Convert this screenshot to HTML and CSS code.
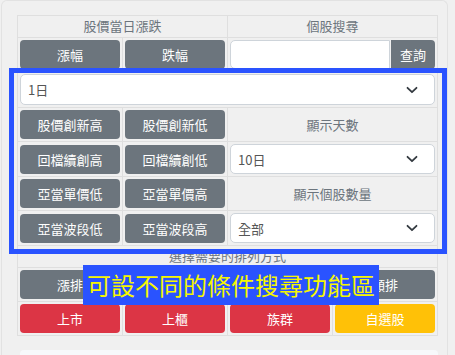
FILE: index.html
```html
<!DOCTYPE html>
<html lang="zh-Hant">
<head>
    <meta charset="UTF-8">
    <title>股價篩選</title>
    <link rel="stylesheet" href="styles.css">
</head>
<body class="page">
<div class="card">
    <table class="grid">
        <colgroup>
            <col><col><col><col>
        </colgroup>
        <tr>
            <th colspan="2">股價當日漲跌</th>
            <th colspan="2">個股搜尋</th>
        </tr>
        <tr>
            <td><button class="btn">漲幅</button></td>
            <td><button class="btn">跌幅</button></td>
            <td colspan="2">
                <div class="search">
                    <input class="search-input" value="">
                    <button class="btn btn-go">查詢</button>
                </div>
            </td>
        </tr>
        <tr>
            <td colspan="4">
                <div class="select select-tall">
                    <span>1日</span>
                    <svg class="chev" width="12" height="8" viewBox="0 0 12 8"><path d="M1.5 1.8 6 6.2 10.5 1.8" fill="none" stroke="#343a40" stroke-width="1.8" stroke-linecap="round" stroke-linejoin="round"/></svg>
                </div>
            </td>
        </tr>
        <tr>
            <td><button class="btn">股價創新高</button></td>
            <td><button class="btn">股價創新低</button></td>
            <td colspan="2" class="label">顯示天數</td>
        </tr>
        <tr>
            <td><button class="btn">回檔續創高</button></td>
            <td><button class="btn">回檔續創低</button></td>
            <td colspan="2">
                <div class="select">
                    <span>10日</span>
                    <svg class="chev" width="12" height="8" viewBox="0 0 12 8"><path d="M1.5 1.8 6 6.2 10.5 1.8" fill="none" stroke="#343a40" stroke-width="1.8" stroke-linecap="round" stroke-linejoin="round"/></svg>
                </div>
            </td>
        </tr>
        <tr>
            <td><button class="btn">亞當單價低</button></td>
            <td><button class="btn">亞當單價高</button></td>
            <td colspan="2" class="label">顯示個股數量</td>
        </tr>
        <tr>
            <td><button class="btn">亞當波段低</button></td>
            <td><button class="btn">亞當波段高</button></td>
            <td colspan="2">
                <div class="select">
                    <span>全部</span>
                    <svg class="chev" width="12" height="8" viewBox="0 0 12 8"><path d="M1.5 1.8 6 6.2 10.5 1.8" fill="none" stroke="#343a40" stroke-width="1.8" stroke-linecap="round" stroke-linejoin="round"/></svg>
                </div>
            </td>
        </tr>
        <tr>
            <th colspan="4">選擇需要的排列方式</th>
        </tr>
        <tr>
            <td><button class="btn">漲排</button></td>
            <td><button class="btn">跌排</button></td>
            <td><button class="btn">量排</button></td>
            <td><button class="btn">額排</button></td>
        </tr>
        <tr>
            <td><button class="btn btn-red">上市</button></td>
            <td><button class="btn btn-red">上櫃</button></td>
            <td><button class="btn btn-red">族群</button></td>
            <td><button class="btn btn-yellow">自選股</button></td>
        </tr>
    </table>
    <div class="next"></div>

    <!-- 標註框 -->
    <div class="mark"></div>
    <div class="mark-label">可設不同的條件搜尋功能區</div>
</div>
</body>
</html>
```

FILE: styles.css
```css
html, body {
    margin: 0;
    padding: 0;
}

.page {
    background: #f0f0f0;
    font-family: "Noto Sans CJK TC", "Noto Sans", sans-serif;
    font-size: 13px;
    width: 455px;
    height: 355px;
    overflow: hidden;
}

.card {
    position: relative;
    box-sizing: border-box;
    margin-left: 1px;
    width: 447px;
    height: 355px;
    overflow: hidden;
    border: 1px solid #e2e2e2;
    border-bottom: 0;
    border-radius: 6px 6px 0 0;
    padding: 14px 9px 0 15px;
    background: #f0f0f0;
}

.grid {
    border-collapse: collapse;
    table-layout: fixed;
    width: 421px;
}

.grid th,
.grid td {
    border: 1px solid #dfdfdf;
    padding: 2px;
    text-align: center;
    vertical-align: middle;
}

.grid th {
    font-weight: normal;
    color: #6c757d;
    height: 18px;
    padding: 1px 2px 2px;
    line-height: 18px;
}

.grid td.label {
    color: #6c757d;
}

.btn {
    display: block;
    width: 100%;
    height: 29px;
    border: 0;
    border-radius: 4px;
    background: #6c757d;
    color: #fff;
    font-family: inherit;
    font-size: 13px;
    padding: 0;
}

.btn-red {
    background: #dc3545;
}

.btn-yellow {
    background: #ffc107;
}

.search {
    display: flex;
}

.search-input {
    flex: 1;
    min-width: 0;
    height: 27px;
    border: 1px solid #ced4da;
    border-radius: 5px 0 0 5px;
    padding: 0;
    background: #fff;
}

.btn-go {
    width: 44px;
    flex: none;
    margin-left: 1px;
    border-radius: 0 4px 4px 0;
}

.select {
    display: flex;
    align-items: center;
    justify-content: space-between;
    height: 28px;
    border: 1px solid #ced4da;
    border-radius: 5px;
    background: #fff;
    padding: 0 16px 0 7px;
    color: #555;
    font-size: 13px;
}

.select-tall {
    height: 29px;
}

.chev {
    display: block;
}

.next {
    margin: 14px 0 0 3px;
    height: 20px;
    background: #f7f9fb;
    border-radius: 4px;
}

.mark {
    position: absolute;
    left: 7px;
    top: 67px;
    width: 428px;
    height: 176px;
    border: 5px solid #2a53ff;
}

.mark-label {
    position: absolute;
    left: 81px;
    top: 264px;
    width: 296px;
    height: 40px;
    background: #2a53ff;
    color: #f6f600;
    font-size: 24px;
    line-height: 40px;
    text-align: center;
    white-space: nowrap;
}
```
